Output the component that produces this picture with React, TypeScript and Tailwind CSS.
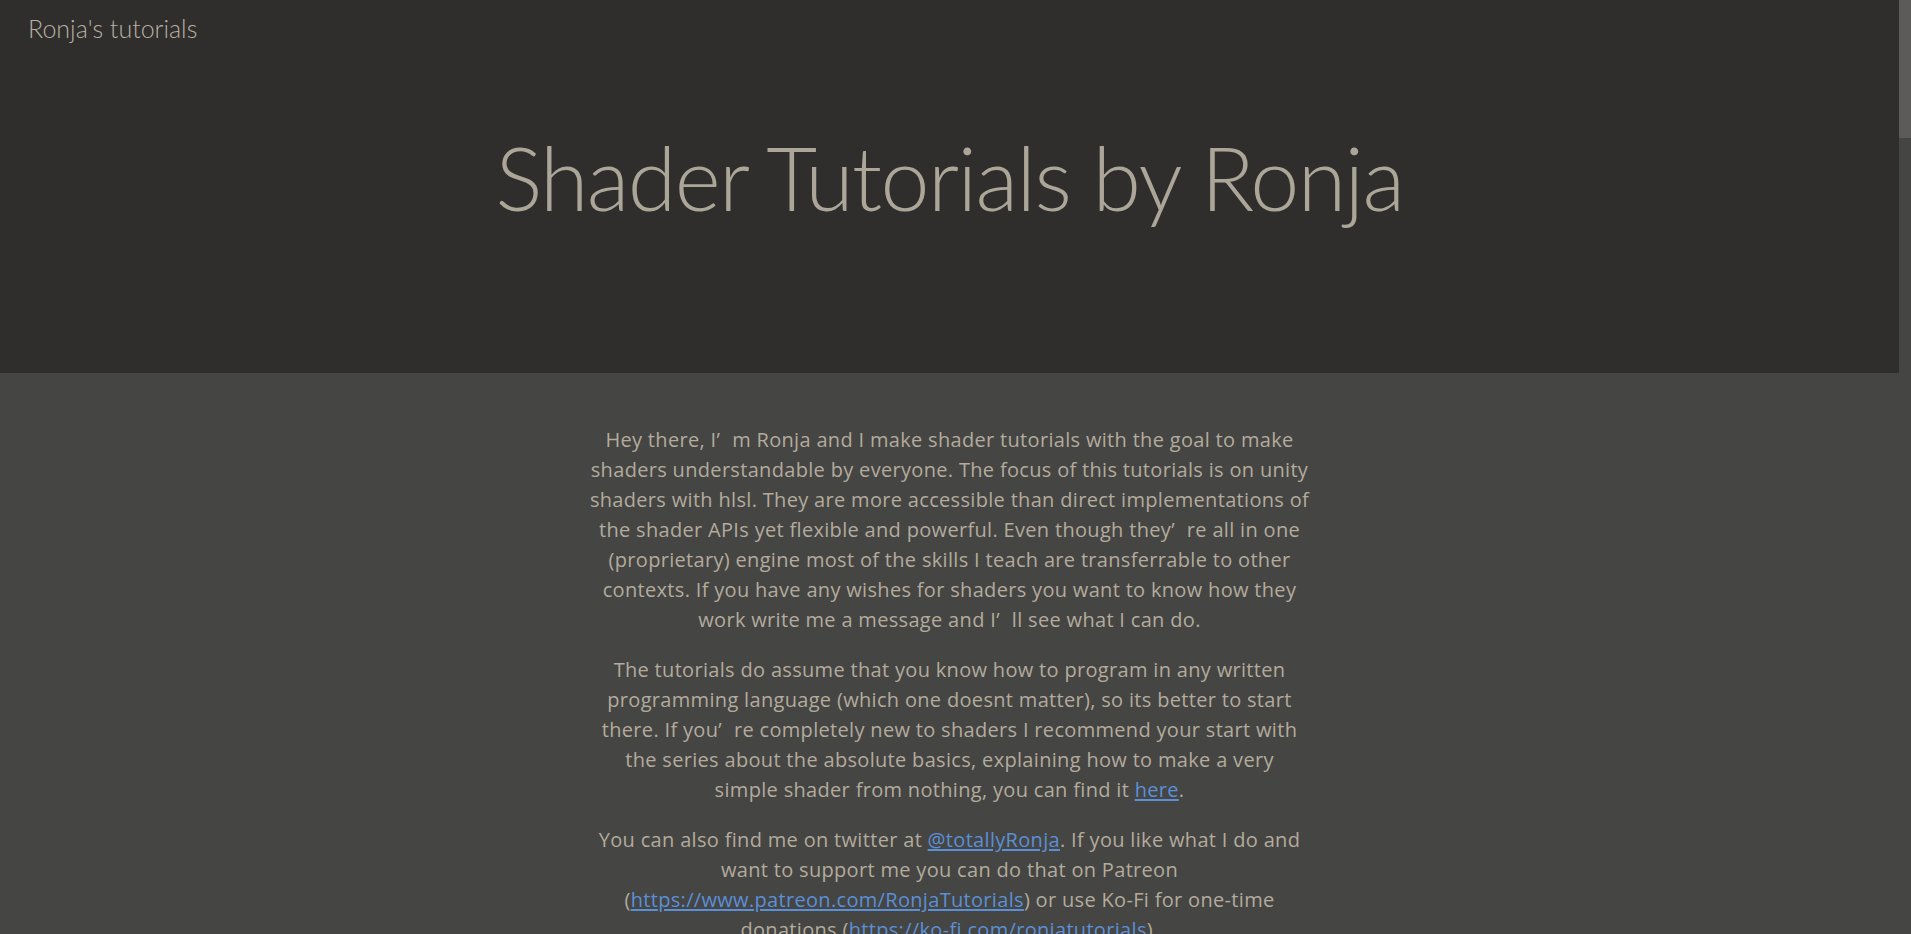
import React from "react";

const head = { fontFamily: '"Lato", "Open Sans", sans-serif' };
const body = { fontFamily: '"Open Sans", "Noto Sans", sans-serif' };

function Apos() {
  // the original page renders the apostrophe with a wide gap after it
  return <span className="mr-[0.6em]">’</span>;
}

function A({ children }: { children: React.ReactNode }) {
  return (
    <a href="#" className="text-[#5b8fd6] underline underline-offset-2">
      {children}
    </a>
  );
}

export default function App() {
  return (
    <div className="flex h-screen w-full overflow-hidden bg-[#454543]">
      <div className="flex-1 min-w-0 overflow-hidden">
        {/* header */}
        <header className="h-[373px] bg-[#2f2e2c] flex flex-col" style={head}>
          <nav className="px-7 pt-[16px] text-[25px] font-light text-[#b8b0a3] leading-none">
            Ronja's tutorials
          </nav>
          <h1 className="mt-[92px] text-center text-[88px] tracking-[-0.018em] font-light leading-none text-[#aca699]">
            Shader Tutorials by Ronja
          </h1>
        </header>

        {/* intro */}
        <main
          className="mx-auto w-[720px] pt-[52px] text-center text-[20px] tracking-[0.016em] leading-[30px] text-[#b3ab9d]"
          style={body}
        >
          <p className="mb-5">
            Hey there, I<Apos />m Ronja and I make shader tutorials with the goal to make
            shaders understandable by everyone. The focus of this tutorials is on unity
            shaders with hlsl. They are more accessible than direct implementations of the
            shader APIs yet flexible and powerful. Even though they<Apos />re all in one
            (proprietary) engine most of the skills I teach are transferrable to other
            contexts. If you have any wishes for shaders you want to know how they work
            write me a message and I<Apos />ll see what I can do.
          </p>
          <p className="mb-5">
            The tutorials do assume that you know how to program in any written programming
            language (which one doesnt matter), so its better to start there. If you<Apos />re
            completely new to shaders I recommend your start with the series about the
            absolute basics, explaining how to make a very
            <br />
            simple shader from nothing, you can find it <A>here</A>.
          </p>
          <p className="mb-5">
            You can also find me on twitter at <A>@totallyRonja</A>. If you like what I do
            and want to support me you can do that on Patreon (
            <A>https://www.patreon.com/RonjaTutorials</A>) or use Ko-Fi for one-time
            donations (<A>https://ko-fi.com/ronjatutorials</A>).
          </p>
        </main>
      </div>

      {/* scrollbar */}
      <div className="w-3 shrink-0 bg-[#454543]">
        <div className="h-[138px] bg-[#5c5b59]" />
      </div>
    </div>
  );
}
